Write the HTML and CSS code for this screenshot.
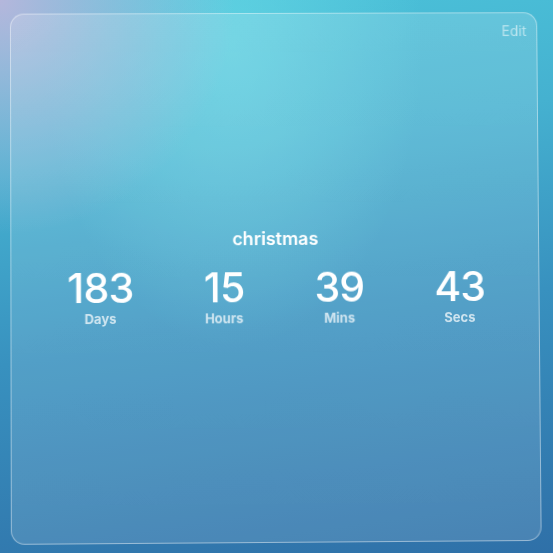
FILE: index.html
```html
<!DOCTYPE html>
<html>
<head>
<meta charset="utf-8">
<link rel="stylesheet" href="styles.css">
</head>
<body>
<div class="stage">
  <div class="card">
    <button class="edit">Edit</button>
    <div class="content">
      <div class="title">christmas</div>
      <div class="units">
        <div class="unit"><div class="num">183</div><div class="label">Days</div></div>
        <div class="unit"><div class="num">15</div><div class="label">Hours</div></div>
        <div class="unit"><div class="num">39</div><div class="label">Mins</div></div>
        <div class="unit"><div class="num">43</div><div class="label">Secs</div></div>
      </div>
    </div>
  </div>
</div>
</body>
</html>
```
FILE: styles.css
```css
html, body {
  margin: 0;
  padding: 0;
  width: 553px;
  height: 553px;
  overflow: hidden;
}
body {
  font-family: Inter, "Noto Sans", sans-serif;
  background:
    radial-gradient(circle at 0% 0%, rgba(186, 182, 220, 0.95) 0%, rgba(186, 182, 220, 0) 30%),
    radial-gradient(ellipse at 42% 8%, rgba(110, 222, 232, 0.55) 0%, rgba(110, 222, 232, 0) 42%),
    linear-gradient(172deg, #4cc4da 0%, #45b1d0 28%, #3891bf 58%, #2f70a8 100%);
}
.stage {
  box-sizing: border-box;
  width: 553px;
  height: 553px;
  padding: 12px 13px 11px 11px;
  display: flex;
}
.card {
  position: relative;
  flex: 1;
  border-radius: 14px;
  border: 1px solid rgba(255, 255, 255, 0.42);
  background: linear-gradient(180deg, rgba(255, 255, 255, 0.15), rgba(255, 255, 255, 0.12));
  transform: perspective(800px) rotateX(0.6deg) rotateY(0.4deg) rotate(-0.3deg);
  outline: 1px solid transparent;
  will-change: transform;
  display: flex;
  align-items: center;
  justify-content: center;
}
.edit {
  position: absolute;
  top: 9px;
  right: 10px;
  background: none;
  border: none;
  padding: 0;
  font-family: inherit;
  font-size: 14px;
  color: rgba(255, 255, 255, 0.55);
}
.content {
  display: flex;
  flex-direction: column;
  align-items: center;
}
.title {
  color: #fff;
  font-size: 18px;
  font-weight: 600;
  line-height: 22px;
  margin-bottom: 16px;
}
.units {
  display: flex;
  gap: 70px;
  margin-left: 2px;
}
.unit {
  display: flex;
  flex-direction: column;
  align-items: center;
}
.num {
  color: #fff;
  font-size: 41px;
  font-weight: 500;
  line-height: 42px;
  letter-spacing: -0.8px;
}
.label {
  color: rgba(255, 255, 255, 0.72);
  font-size: 13px;
  font-weight: 700;
  line-height: 16px;
  margin-top: 2px;
}
```
